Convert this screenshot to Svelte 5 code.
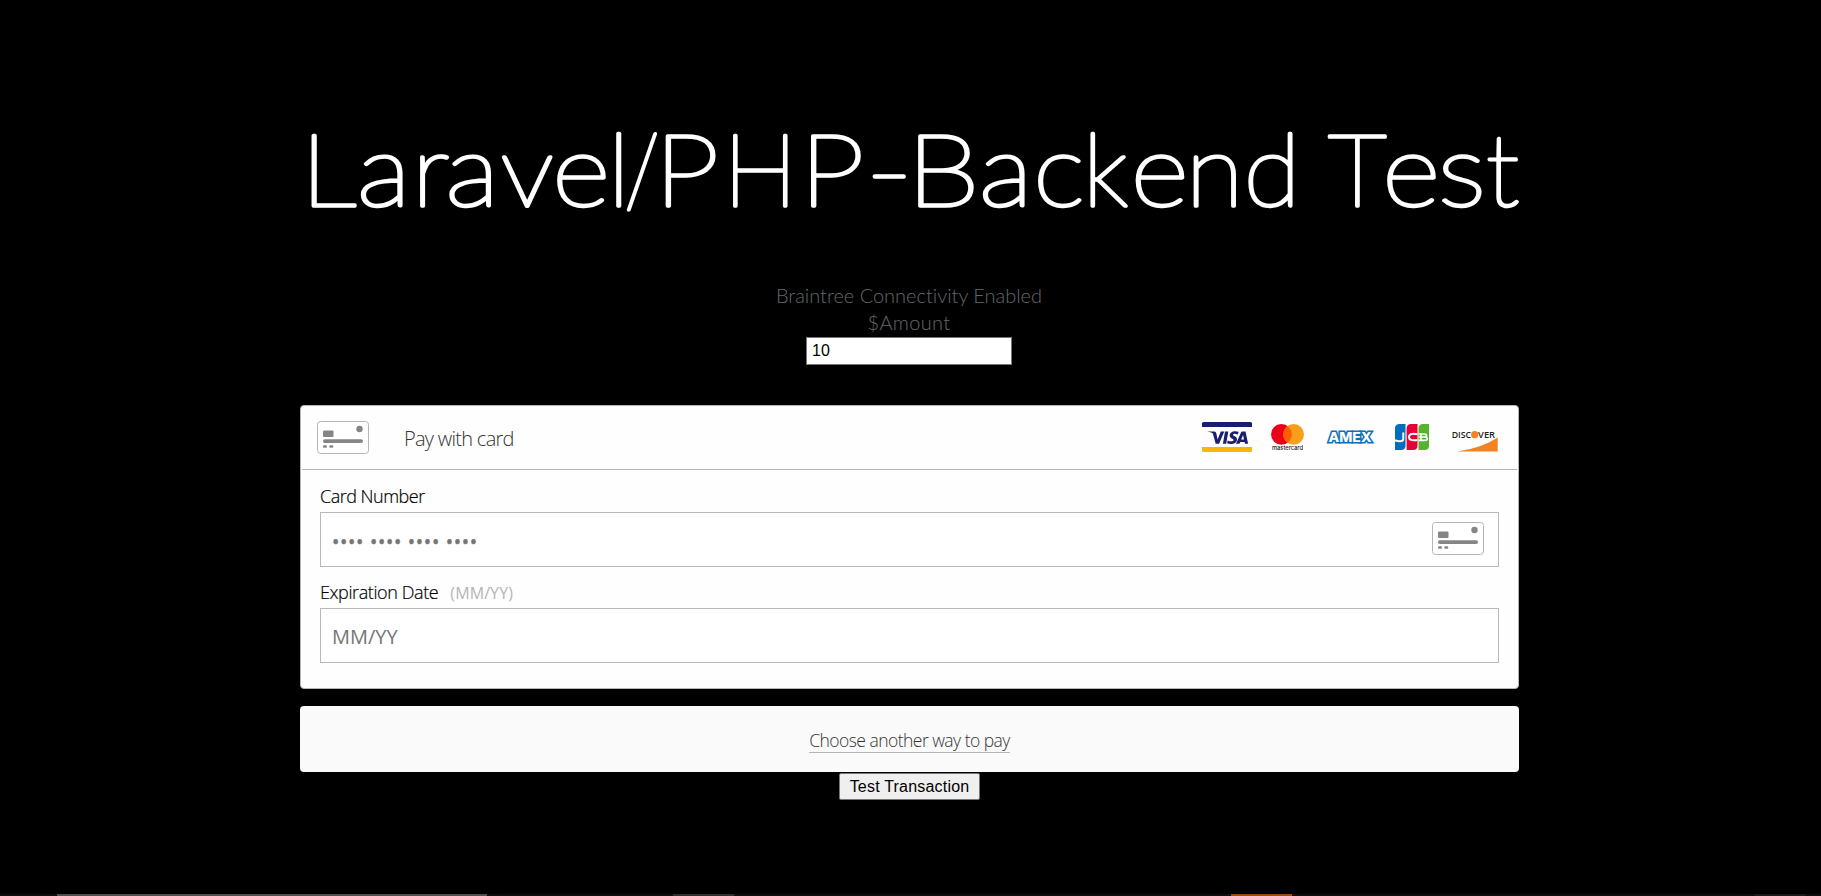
<script>
  let amount = $state('10');

  // Title letters: left edge of the ink, side bearing and horizontal stretch.
  const letters = [
    ['L', 310.6, 9.4, 1.12], ['a', 362.4, 5.1, 1.13], ['r', 419.3, 7.2, 1.08], ['a', 450.9, 5.1, 1.13], ['v', 500.4, 0, 1.08],
    ['e', 556.1, 3.7, 1.12], ['l', 615, 7.2, 1.08], ['/', 626.5, 2.5, 0.82], ['P', 664.8, 9.4, 1.16], ['H', 731.7, 9, 0.99],
    ['P', 810, 9.4, 1.16], ['-', 870.9, 4.6, 1.3], ['B', 917.1, 9.4, 1.18], ['a', 984.3, 5.1, 1.13], ['c', 1036.9, 3.7, 1.1],
    ['k', 1089.9, 7.2, 1], ['e', 1134.6, 3.7, 1.12], ['n', 1193.1, 7.2, 1.06], ['d', 1247.3, 3.7, 1.04],
    ['T', 1328, 0.3, 1.03], ['e', 1386.1, 3.7, 1.12], ['s', 1441, 3.2, 1.15], ['t', 1486.1, 0.5, 1.01]
  ];
</script>

{#snippet cardIcon()}
  <svg class="card-icon" width="53" height="34" viewBox="0 0 53 34">
    <rect x="0.5" y="0.5" width="51" height="32" rx="3" fill="#fff" stroke="#b5b5b5" />
    <g fill="#858585">
      <rect x="6" y="9.5" width="10.5" height="6.5" rx="1" />
      <circle cx="42.5" cy="8" r="3.2" />
      <rect x="6" y="18.2" width="40" height="3.8" rx="1.9" />
      <rect x="6" y="24.3" width="4" height="2.5" rx="1.2" />
      <rect x="12.3" y="24.3" width="4" height="2.5" rx="1.2" />
    </g>
  </svg>
{/snippet}

<main>
  <svg class="title" width="1219" height="130" viewBox="300 110 1219 130" role="heading" aria-level="1">
    {#each letters as [char, left, bearing, stretch]}
      <text transform="translate({left - bearing * stretch + 0.4} 206.3) scale({stretch} 1)">{char}</text>
    {/each}
  </svg>

  <div class="status"><span class="s1">Braintree Connectivity Enabled</span></div>
  <label class="status" for="amount"><span class="s2">$Amount</span></label>
  <input id="amount" class="amount" bind:value={amount} />

  <section class="sheet">
    <header>
      {@render cardIcon()}
      <span class="pay">Pay with card</span>
      <div class="brands">
        <svg width="52" height="32" viewBox="1201 421 52 32">
          <path d="M1202 427v-3.5q0-1.5 1.500-1.500h47q1.500 0 1.500 1.500v3.500z" fill="#191e6e" />
          <path d="M1202 447h50v3.500q0 1.500-1.500 1.500h-47q-1.500 0-1.500-1.500z" fill="#f9b50b" />
          <path d="M1207 431.400h7.300q1.600 0 1.900 1.600l1.400 6.500 3.200-8.100h3.500l-5.200 12.400h-3.400l-2.700-9.800q-.3-.8-1.200-1.200-2-1-4.800-1.400z" fill="#191e6e" />
          <path d="M1225 431.400h3.300l-2.100 12.400h-3.300zM1238.500 431.800l-.5 2.700q-4.800-1.600-5 .2c0 1.400 4.400 1.500 4 5.200-.6 4.400-6.700 4.600-9.900 3.300l.6-2.800c2 1.200 5.600 1.300 5.800-.2.200-1.600-4.100-1.600-3.800-5.100.4-4.100 5.700-4.600 8.800-3.300z" fill="#191e6e" />
          <path fill-rule="evenodd" d="M1242.300 431.400h3.200l2.600 12.400h-3.100l-.4-1.900h-4.300l-.8 1.900h-3.500l5-11.400q.4-1 1.300-1zm.8 3.600-1.900 4.600h2.800z" fill="#191e6e" />
        </svg>
        <svg width="52" height="32" viewBox="1263 421 52 32">
          <circle cx="1281.400" cy="434.300" r="10.400" fill="#eb001b" />
          <circle cx="1293.600" cy="434.300" r="10.400" fill="#f79e1b" />
          <path d="M1287.500 425.900a10.400 10.400 0 0 1 0 16.800 10.400 10.400 0 0 1 0-16.800z" fill="#ff5f00" />
          <text x="1272" y="450.200" textLength="31" lengthAdjust="spacingAndGlyphs" class="mc">mastercard</text>
        </svg>
        <svg width="52" height="32" viewBox="1325 421 52 32">
          <text x="1328.500" y="441.500" textLength="43" lengthAdjust="spacingAndGlyphs" class="amex">AMEX</text>
        </svg>
        <svg width="52" height="32" viewBox="1387 421 52 32">
          <path d="M1395 428.500q0-4.500 4.500-4.500h6v21.500q0 4.500-4.500 4.500h-6z" fill="#006ebc" />
          <path d="M1406.600 428.500q0-4.500 4.500-4.500h6.400v21.500q0 4.500-4.500 4.500h-6.400z" fill="#e50038" />
          <path d="M1418.500 428.500q0-4.500 4.500-4.500h6v21.500q0 4.500-4.500 4.500h-6z" fill="#55b330" />
          <g fill="none" stroke="#fff" stroke-width="2">
            <path d="M1403.300 432.500v6.200q0 2.500-3.500 2.500-2.700 0-4.800-1.100" />
            <path d="M1417.500 434.200q-8.500-1.500-8.500 2.800t8.500 2.900" />
            <path d="M1418.500 434h6q2 0 2 1.500t-2 1.500h-5.500 6q2.200 0 2.200 1.700t-2.200 1.700h-6.500M1421 434v6.500" stroke-width="1.600" />
          </g>
        </svg>
        <svg width="52" height="32" viewBox="1449 421 52 32">
          <text x="1451.700" y="438.300" textLength="19.500" lengthAdjust="spacingAndGlyphs" class="disc">DISC</text>
          <circle cx="1474.700" cy="434.700" r="3.600" fill="#f58220" />
          <text x="1478.100" y="438.300" textLength="17" lengthAdjust="spacingAndGlyphs" class="disc">VER</text>
          <path d="M1497.700 437.500v14h-40.500q25-3.500 40.500-14z" fill="#f58220" />
        </svg>
      </div>
    </header>
    <div class="form">
      <div class="label"><span class="cn">Card Number</span></div>
      <div class="field">
        <span class="dots">•••• •••• •••• ••••</span>
        {@render cardIcon()}
      </div>
      <div class="label second"><span class="ed">Expiration Date</span><span class="hint">(MM/YY)</span></div>
      <div class="field"><span class="mm">MM/YY</span></div>
    </div>
  </section>

  <div class="other"><span>Choose another way to pay</span></div>
  <button>Test Transaction</button>
  <div class="edge"><i class="a"></i><i class="b"></i><i class="c"></i><i class="d"></i></div>
</main>

<style>
  :global(body) { margin: 0; background: #000; }
  main {
    box-sizing: border-box; width: 100%; height: 896px; padding-top: 110px; background: #000; overflow: hidden;
    display: flex; flex-direction: column; align-items: center;
    font-family: "Open Sans", sans-serif; font-weight: 300;
  }
  .title { margin-bottom: 42px; margin-right: 2px; flex: none; overflow: visible; }
  .title text {
    font: 100 100px Lato, sans-serif; fill: #fff;
    stroke: #fff; stroke-width: 3.4px; stroke-linejoin: round; stroke-linecap: round;
  }
  .status { height: 27px; line-height: 27px; margin-right: 3px; font-family: Lato, sans-serif; font-weight: 300; font-size: 20px; color: #62696e; white-space: nowrap; font-variant-ligatures: none; }
  .s1 { letter-spacing: -0.02px; }
  .s2 { letter-spacing: 0.35px; }
  .amount {
    box-sizing: border-box; width: 206px; height: 28px; margin: 1px 3px 40px 0; padding: 1px 5px;
    border: 1px solid #767676; background: #fff; font: 16px "Liberation Sans", sans-serif; color: #000; border-radius: 0;
  }
  .sheet { box-sizing: border-box; width: 1219px; height: 284px; border: 1px solid #b5b5b5; border-radius: 4px; background: #fefefe; margin: 0 2px 17px 0; flex: none; }
  header { height: 63px; margin: 0 1px; border-bottom: 1px solid #b5b5b5; display: flex; padding-left: 15px; }
  .card-icon { margin-top: 15px; flex: none; }
  .pay { margin-left: 34px; line-height: 66px; font-size: 20px; color: #333; white-space: nowrap; letter-spacing: -0.72px; }
  .brands { margin: 15px 16px 0 auto; display: flex; gap: 10px; }
  .mc { font: 500 6.500px Inter, sans-serif; fill: #222; }
  .amex { font: 800 12.500px Inter, sans-serif; fill: #fff; stroke: #1070b8; stroke-width: 3px; paint-order: stroke; }
  .disc { font: 600 9.500px "Open Sans", sans-serif; fill: #231f20; }
  .form { padding: 12px 19px 0; }
  .label { height: 30px; line-height: 28px; font-size: 18px; color: #000; white-space: nowrap; display: flex; align-items: flex-start; }
  .label.second { margin-top: 11px; }
  .cn, .ed { letter-spacing: -0.4px; -webkit-text-stroke: 0.2px #000; }
  .cn { letter-spacing: -0.5px; }
  .hint { font-size: 16px; font-weight: 400; color: #b5b5b5; margin-left: 12px; letter-spacing: 0.1px; line-height: 30px; }
  .field { box-sizing: border-box; height: 55px; border: 1px solid #b8b8b8; background: #fff; display: flex; justify-content: space-between; padding: 0 13px 0 11px; color: #757575; }
  .field .card-icon { margin-top: 9px; }
  .dots { font-size: 19.5px; font-weight: 400; line-height: 58px; letter-spacing: 0.7px; -webkit-text-stroke: 0.5px #757575; }
  .mm { font-size: 20px; font-weight: 400; line-height: 56px; letter-spacing: 0; }
  .other { width: 1219px; height: 66px; margin-right: 2px; background: #fafafa; border-radius: 4px; display: flex; justify-content: center; align-items: flex-start; flex: none; }
  .other span { margin-top: 20px; height: 26px; line-height: 28px; border-bottom: 1px solid #b5b5b5; font-size: 17.500px; color: #333; white-space: nowrap; letter-spacing: -0.53px; }
  button { box-sizing: border-box; width: 141px; height: 27px; margin: 1px 2px 0 0; padding: 0; border: 1px solid #767676; border-radius: 2px; background: #efefef; font: 16px "Liberation Sans", sans-serif; letter-spacing: 0.2px; color: #000; white-space: nowrap; }
  .edge { width: 100%; height: 2px; margin-top: auto; background: #120c0f; display: flex; }
  .edge i { height: 2px; flex: none; }
  .a { width: 430px; margin-left: 57px; background: #504e4f; }
  .b { width: 61px; margin-left: 186px; background: #302e2f; }
  .c { width: 61px; margin-left: 497px; background: #964c14; }
  .d { width: 50px; margin-left: 463px; background: #1d191b; }
</style>
